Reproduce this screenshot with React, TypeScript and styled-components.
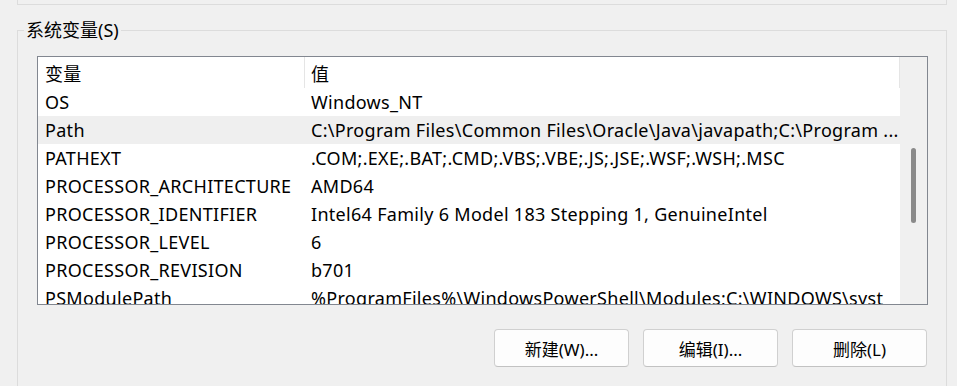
import React from 'react';
import styled, { createGlobalStyle } from 'styled-components';

const GlobalStyle = createGlobalStyle({
  "html, body": {
    margin: 0,
    padding: 0,
    background: "#f0f0f0",
    fontFamily: "'Noto Sans', 'Noto Sans CJK SC', sans-serif",
    color: "#000",
  },
});

const Page = styled.div({
  width: "957px",
  height: "386px",
  overflow: "hidden",
  background: "#f0f0f0",
})

// bottom edge of the user-variables group above
const UpperGroup = styled.div({
  marginLeft: "17px",
  width: "928px",
  height: "4px",
  borderLeft: "1px solid #dcdcdc",
  borderRight: "1px solid #dcdcdc",
  borderBottom: "1px solid #dcdcdc",
})

const Group = styled.fieldset({
  margin: "14px 0 0 17px",
  width: "930px",
  padding: "15px 18px 20px 19px",
  border: "1px solid #dcdcdc",
  borderBottom: "none",
  boxSizing: "border-box",
  height: "400px",
})

const Legend = styled.legend({
  fontSize: "18px",
  lineHeight: "22px",
  padding: "0 2px",
  marginLeft: "-13px",
})

const ListBox = styled.div({
  display: "flex",
  height: "249px",
  border: "1px solid #828790",
  background: "#fff",
  boxSizing: "border-box",
})

const Table = styled.div({
  flex: 1,
  overflow: "hidden",
  fontSize: "18px",
  letterSpacing: "0.3px",
})

const Header = styled.div({
  display: "grid",
  gridTemplateColumns: "267px 1fr",
  height: "31px",
  borderRight: "1px solid #e5e5e5",
})

const HeaderCell = styled.div<{ $divider?: boolean }>(({ $divider }) => ({
  display: "flex",
  alignItems: "center",
  paddingLeft: $divider ? "7px" : "6px",
  borderRight: $divider ? "1px solid #e5e5e5" : "none",
}))

const Row = styled.div<{ $hover?: boolean }>(({ $hover }) => ({
  display: "grid",
  gridTemplateColumns: "267px 1fr",
  height: "28px",
  alignItems: "center",
  background: $hover ? "#efefef" : "transparent",
}))

const Cell = styled.div<{ $first?: boolean }>(({ $first }) => ({
  paddingLeft: $first ? "7px" : "6px",
  paddingRight: "10px",
  whiteSpace: "nowrap",
  overflow: "hidden",
}))

const ScrollTrack = styled.div({
  width: "27px",
  background: "#f0f0f0",
  position: "relative",
})

const ScrollThumb = styled.div({
  position: "absolute",
  left: "11px",
  top: "91px",
  width: "5px",
  height: "75px",
  borderRadius: "3px",
  background: "#8a8a8a",
})

const ButtonRow = styled.div({
  display: "flex",
  justifyContent: "flex-end",
  gap: "14px",
  marginTop: "24px",
  paddingRight: "1px",
})

const Button = styled.button({
  width: "135px",
  height: "38px",
  boxSizing: "border-box",
  border: "1px solid #d0d0d0",
  borderBottomColor: "#c2c2c2",
  borderRadius: "4px",
  background: "#fdfdfd",
  fontFamily: "'Noto Sans', 'Noto Sans CJK SC', sans-serif",
  fontSize: "17px",
  color: "#000",
  padding: 0,
})

const vars: [string, string][] = [
  ["OS", "Windows_NT"],
  ["Path", "C:\\Program Files\\Common Files\\Oracle\\Java\\javapath;C:\\Program ..."],
  ["PATHEXT", ".COM;.EXE;.BAT;.CMD;.VBS;.VBE;.JS;.JSE;.WSF;.WSH;.MSC"],
  ["PROCESSOR_ARCHITECTURE", "AMD64"],
  ["PROCESSOR_IDENTIFIER", "Intel64 Family 6 Model 183 Stepping 1, GenuineIntel"],
  ["PROCESSOR_LEVEL", "6"],
  ["PROCESSOR_REVISION", "b701"],
  ["PSModulePath", "%ProgramFiles%\\WindowsPowerShell\\Modules;C:\\WINDOWS\\syst"],
]

function App() {
  return (
    <Page>
      <GlobalStyle />
      <UpperGroup />
      <Group>
        <Legend>系统变量(S)</Legend>
        <ListBox>
          <Table>
            <Header>
              <HeaderCell $divider>变量</HeaderCell>
              <HeaderCell>值</HeaderCell>
            </Header>
            {vars.map(([name, value]) => (
              <Row key={name} $hover={name === "Path"}>
                <Cell $first>{name}</Cell>
                <Cell>{value}</Cell>
              </Row>
            ))}
          </Table>
          <ScrollTrack>
            <ScrollThumb />
          </ScrollTrack>
        </ListBox>
        <ButtonRow>
          <Button>新建(W)...</Button>
          <Button>编辑(I)...</Button>
          <Button>删除(L)</Button>
        </ButtonRow>
      </Group>
    </Page>
  );
}

export default App;
